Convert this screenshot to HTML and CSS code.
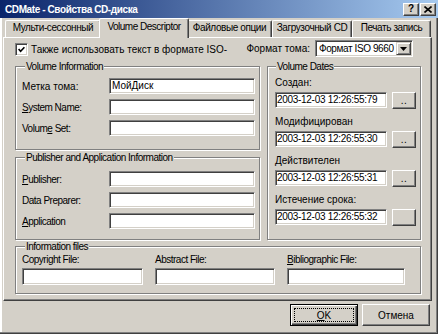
FILE: index.html
```html
<!DOCTYPE html>
<html lang="ru">
<head>
<meta charset="utf-8">
<title>CDMate - Свойства CD-диска</title>
<link rel="stylesheet" href="styles.css">
</head>
<body>
<div class="window">
  <div class="titlebar">
    <span class="title">CDMate - Свойства CD-диска</span>
    <div class="tb-btns">
      <span class="tb-btn help">?</span>
      <span class="tb-btn close"><svg width="8" height="7" viewBox="0 0 8 7"><path d="M0.5 0.5 L7.5 6.5 M7.5 0.5 L0.5 6.5" stroke="#000" stroke-width="1.6" fill="none"/></svg></span>
    </div>
  </div>
  <div class="body">
    <div class="tabs">
      <div class="tab t1">Мульти-сессонный</div>
      <div class="tab t2 active en">Volume Descriptor</div>
      <div class="tab t3">Файловые опции</div>
      <div class="tab t4">Загрузочный CD</div>
      <div class="tab t5">Печать запись</div>
    </div>
    <div class="panel">
      <div class="top-row">
        <div class="check">
          <span class="cb"><svg width="7" height="7" viewBox="0 0 7 7"><path d="M0.6 3 L2.6 5.2 L6.4 1.2" stroke="#000" stroke-width="1.6" fill="none"/></svg></span>
          <span>Также использовать текст в формате ISO-</span>
        </div>
        <div class="fmt">
          <span>Формат тома:</span>
          <div class="combo">
            <span class="combo-text">Формат ISO 9660</span>
            <span class="combo-btn"><svg width="7" height="4" viewBox="0 0 7 4"><path d="M0 0 H7 L3.5 4 Z" fill="#000"/></svg></span>
          </div>
        </div>
      </div>
      <div class="mid">
        <div class="leftcol">
          <fieldset class="group vol">
            <legend class="en">Volume Information</legend>
            <div class="rows">
              <div class="row"><span class="lbl">Метка тома:</span><div class="field">МойДиск</div></div>
              <div class="row"><span class="lbl en"><u>S</u>ystem Name:</span><div class="field"></div></div>
              <div class="row"><span class="lbl en">Volum<u>e</u> Set:</span><div class="field"></div></div>
            </div>
          </fieldset>
          <fieldset class="group pub">
            <legend class="en">Publisher and Application Information</legend>
            <div class="rows">
              <div class="row"><span class="lbl en"><u>P</u>ublisher:</span><div class="field"></div></div>
              <div class="row"><span class="lbl en">Data Preparer:</span><div class="field"></div></div>
              <div class="row"><span class="lbl en"><u>A</u>pplication</span><div class="field"></div></div>
            </div>
          </fieldset>
        </div>
        <fieldset class="group dates">
          <legend class="en">Volume Dates</legend>
          <div class="date-block">
            <div class="dlbl">Создан:</div>
            <div class="drow"><div class="field dfield">2003-12-03 12:26:55:79</div><span class="dbtn">..</span></div>
          </div>
          <div class="date-block">
            <div class="dlbl">Модифицирован</div>
            <div class="drow"><div class="field dfield">2003-12-03 12:26:55:30</div><span class="dbtn">..</span></div>
          </div>
          <div class="date-block">
            <div class="dlbl">Действителен</div>
            <div class="drow"><div class="field dfield">2003-12-03 12:26:55:31</div><span class="dbtn">..</span></div>
          </div>
          <div class="date-block">
            <div class="dlbl">Истечение срока:</div>
            <div class="drow"><div class="field dfield">2003-12-03 12:26:55:32</div><span class="dbtn"></span></div>
          </div>
        </fieldset>
      </div>
      <fieldset class="group files">
        <legend class="en">Information files</legend>
        <div class="files-grid">
          <div class="fcol"><div class="flbl en">Copyright File:</div><div class="field ffield"></div></div>
          <div class="fcol"><div class="flbl en">Abstract File:</div><div class="field ffield"></div></div>
          <div class="fcol"><div class="flbl en"><u>B</u>ibliographic File:</div><div class="field ffield"></div></div>
        </div>
      </fieldset>
    </div>
    <div class="buttons">
      <div class="btn default"><span class="focus"><u>O</u>K</span></div>
      <div class="btn">Отмена</div>
    </div>
  </div>
</div>
</body>
</html>
```
FILE: styles.css
```css
* { box-sizing: border-box; }
html, body { margin: 0; padding: 0; }
body {
  width: 438px;
  height: 334px;
  overflow: hidden;
  background: #d4d0c8;
  font-family: "Liberation Sans", Arial, sans-serif;
  font-size: 10px;
  color: #000;
}
u { text-decoration: underline; text-underline-offset: 1px; }
.en { letter-spacing: -0.5px; }

.window {
  width: 438px;
  height: 334px;
  display: flex;
  flex-direction: column;
  background: #d4d0c8;
}

/* title bar */
.titlebar {
  height: 18px;
  flex: none;
  display: flex;
  align-items: center;
  justify-content: space-between;
  padding: 0 2px 0 5px;
  background: linear-gradient(to right, #0a246a, #a6caf0);
}
.title {
  color: #fff;
  font-weight: bold;
  font-size: 10px;
  letter-spacing: -0.4px;
}
.tb-btns { display: flex; gap: 1px; }
.tb-btn {
  width: 16px;
  height: 13px;
  background: #d4d0c8;
  border: 1px solid;
  border-color: #fff #404040 #404040 #fff;
  box-shadow: inset -1px -1px 0 #808080;
  display: flex;
  align-items: center;
  justify-content: center;
  font-weight: bold;
  font-size: 10px;
  line-height: 10px;
}

/* body */
.body {
  flex: 1;
  display: flex;
  flex-direction: column;
  padding: 0 5px 0 3px;
  border-right: 1px solid #404040;
  border-bottom: 1px solid #404040;
  box-shadow: inset -1px -1px 0 #808080, inset 2px 0 0 #fff, inset 1px 0 0 #d4d0c8;
}

/* tabs */
.tabs {
  display: flex;
  align-items: flex-end;
  height: 19px;
  flex: none;
  padding-left: 2px;
}
.tab {
  height: 17px;
  border: 1px solid;
  border-bottom: none;
  border-color: #fff #404040 transparent #fff;
  box-shadow: inset -1px 0 0 #808080;
  border-radius: 2px 2px 0 0;
  text-align: center;
  line-height: 14px;
  white-space: nowrap;
  overflow: hidden;
  flex: none;
  letter-spacing: -0.4px;
}
.t1 { width: 96px; }
.t2 { width: 90px; }
.t3 { width: 85px; }
.t4 { width: 80px; }
.t5 { width: 79px; }
.tab.active {
  height: 20px;
  margin: 0 -2px -1px;
  background: #d4d0c8;
  position: relative;
  z-index: 2;
  line-height: 15px;
  letter-spacing: -0.5px;
}

/* panel */
.panel {
  width: 429px;
  height: 264px;
  flex: none;
  border: 1px solid;
  border-color: #fff #404040 #404040 #fff;
  box-shadow: inset -1px -1px 0 #808080;
  padding: 2px 10px 0 11px;
  display: flex;
  flex-direction: column;
}

.top-row {
  height: 17px;
  display: flex;
  align-items: center;
  justify-content: space-between;
}
.check { display: flex; align-items: center; gap: 3px; margin-top: 2px; }
.cb {
  width: 13px;
  height: 13px;
  background: #fff;
  border: 1px solid;
  border-color: #808080 #fff #fff #808080;
  box-shadow: inset 1px 1px 0 #404040, inset -1px -1px 0 #d4d0c8;
  display: flex;
  align-items: center;
  justify-content: center;
}
.fmt { display: flex; align-items: center; gap: 5px; margin-right: 8px; }
.combo {
  width: 98px;
  height: 17px;
  background: #fff;
  border: 1px solid;
  border-color: #808080 #fff #fff #808080;
  box-shadow: inset 1px 1px 0 #404040, inset -1px -1px 0 #d4d0c8;
  padding: 1px;
  display: flex;
  align-items: center;
  justify-content: space-between;
}
.combo-text {
  padding-left: 2px;
  line-height: 13px;
  white-space: nowrap;
  overflow: hidden;
  letter-spacing: -0.4px;
  flex: 1;
}
.combo-btn {
  width: 15px;
  height: 13px;
  flex: none;
  background: #d4d0c8;
  border: 1px solid;
  border-color: #d4d0c8 #404040 #404040 #d4d0c8;
  box-shadow: inset 1px 1px 0 #fff, inset -1px -1px 0 #808080;
  display: flex;
  align-items: center;
  justify-content: center;
}

/* group boxes */
.group {
  margin: 0;
  min-width: 0;
  border: 1px solid #808080;
  box-shadow: inset 1px 1px 0 #fff, 1px 1px 0 #fff;
}
.group legend {
  padding: 0 1px;
  margin-left: 3px;
  line-height: 11px;
  background: #d4d0c8;
}

.mid {
  display: flex;
  gap: 7px;
  margin-top: 4px;
  height: 179px;
  flex: none;
}
.leftcol {
  width: 245px;
  display: flex;
  flex-direction: column;
  gap: 2px;
}
.vol { height: 89px; padding: 6px 4px 0 6px; }
.pub { height: 88px; padding: 8px 4px 0 6px; }
.rows { display: flex; flex-direction: column; gap: 5px; }
.row { display: flex; align-items: center; height: 16px; }
.lbl { flex: 1; white-space: nowrap; }

.field {
  height: 16px;
  background: #fff;
  border: 1px solid;
  border-color: #808080 #fff #fff #808080;
  box-shadow: inset 1px 1px 0 #404040, inset -1px -1px 0 #d4d0c8;
  padding: 0 2px;
  line-height: 14px;
  white-space: nowrap;
  overflow: hidden;
}
.row .field { width: 146px; flex: none; }

.dates { width: 154px; height: 179px; padding: 4px 4px 0 7px; }
.dates legend { margin-left: 1px; }
.date-block + .date-block { margin-top: 6px; }
.dlbl { line-height: 14px; height: 14px; margin-bottom: 2px; white-space: nowrap; }
.drow { display: flex; align-items: flex-start; gap: 5px; height: 17px; }
.dfield { width: 112px; letter-spacing: -0.3px; padding-left: 1px; }
.dbtn {
  width: 24px;
  height: 17px;
  background: #d4d0c8;
  border: 1px solid;
  border-color: #fff #404040 #404040 #fff;
  box-shadow: inset -1px -1px 0 #808080;
  text-align: center;
  line-height: 15px;
  letter-spacing: 0.5px;
}

.files { margin-top: 1px; height: 53px; padding: 1px 0 0 6px; flex: none; }
.files-grid {
  display: grid;
  grid-template-columns: 121px 120px 118px;
  column-gap: 12px;
}
.flbl { line-height: 14px; height: 14px; margin-bottom: 1px; white-space: nowrap; }
.ffield { height: 17px; }

/* buttons */
.buttons {
  display: flex;
  justify-content: flex-end;
  gap: 4px;
  margin-top: 3px;
  padding-right: 2px;
}
.btn {
  width: 68px;
  height: 22px;
  background: #d4d0c8;
  border: 1px solid;
  border-color: #fff #404040 #404040 #fff;
  box-shadow: inset -1px -1px 0 #808080;
  display: flex;
  align-items: center;
  justify-content: center;
}
.btn.default {
  border-color: #000;
  box-shadow: inset 1px 1px 0 #fff, inset -1px -1px 0 #404040, inset -2px -2px 0 #808080;
  padding: 3px;
}
.focus {
  flex: 1;
  align-self: stretch;
  border: 1px dotted #000;
  display: flex;
  align-items: center;
  justify-content: center;
}
```
